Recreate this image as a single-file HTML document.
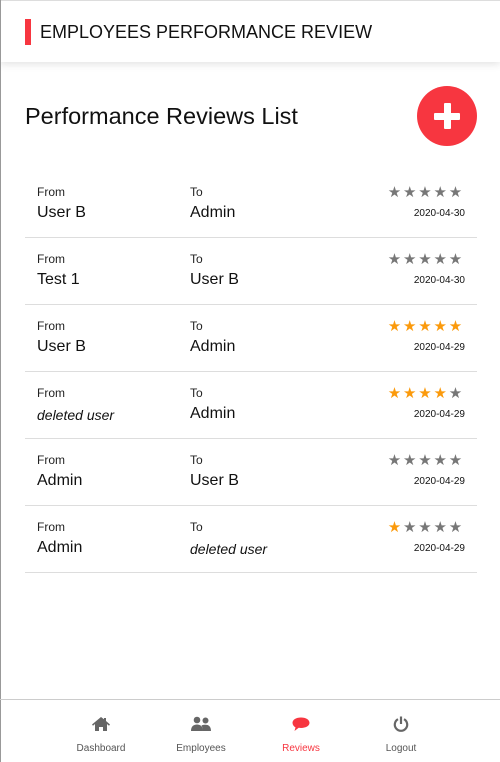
<!DOCTYPE html>
<html><head><style>
*{margin:0;padding:0;box-sizing:border-box}
body{width:500px;height:762px;background:#fff;font-family:"Liberation Sans",sans-serif;color:#222;position:relative;overflow:hidden}
.lb{position:absolute;left:0;top:0;width:1px;height:762px;background:#999}
.hdr{position:absolute;left:0;top:0;width:500px;height:62px;background:#fff;box-shadow:0 2px 8px rgba(0,0,0,.12);border-top:1px solid #ddd}
.bar{position:absolute;left:25px;top:18px;width:6px;height:26px;background:#f73640}
.hdr h1{position:absolute;left:40px;top:21px;font-size:18px;font-weight:normal;color:#111}
.title{position:absolute;left:25px;top:103px;font-size:23.5px;color:#111}
.fab{position:absolute;left:417px;top:86px;width:60px;height:60px;border-radius:50%;background:#f73640}
.fab:before{content:"";position:absolute;left:17px;top:26.5px;width:26px;height:7px;background:#fff;border-radius:1px}
.fab:after{content:"";position:absolute;left:26.5px;top:17px;width:7px;height:26px;background:#fff;border-radius:1px}
.row{position:absolute;left:25px;width:452px;height:67px;border-bottom:1px solid #ddd}
.l{position:absolute;font-size:12px;top:14px;color:#222}
.n{position:absolute;font-size:16px;top:33px;color:#111}
.i{font-style:italic;font-size:14px;top:35px}
.stars{position:absolute;right:13px;top:12px;font-size:15px;letter-spacing:1.8px;color:#777}
.stars b{color:#fb9a0c;font-weight:normal}
.d{position:absolute;right:12px;top:37px;font-size:10px;color:#111}
.nav{position:absolute;left:0;top:699px;width:500px;height:63px;border-top:1px solid #ccc}
.it{position:absolute;top:16px;width:100px;text-align:center;font-size:10px;color:#555}
.it svg{display:block;margin:0 auto 11px;height:16px}
.red{color:#f73640}
</style></head><body>
<div class="hdr"><div class="bar"></div><h1>EMPLOYEES PERFORMANCE REVIEW</h1></div>
<div class="lb"></div>
<div class="title">Performance Reviews List</div>
<div class="fab"></div>

<div class="row" style="top:171px"><span class="l" style="left:12px">From</span><span class="n" style="left:12px">User B</span><span class="l" style="left:165px">To</span><span class="n" style="left:165px">Admin</span><span class="stars">★★★★★</span><span class="d">2020-04-30</span></div>
<div class="row" style="top:238px"><span class="l" style="left:12px">From</span><span class="n" style="left:12px">Test 1</span><span class="l" style="left:165px">To</span><span class="n" style="left:165px">User B</span><span class="stars">★★★★★</span><span class="d">2020-04-30</span></div>
<div class="row" style="top:305px"><span class="l" style="left:12px">From</span><span class="n" style="left:12px">User B</span><span class="l" style="left:165px">To</span><span class="n" style="left:165px">Admin</span><span class="stars"><b>★★★★★</b></span><span class="d">2020-04-29</span></div>
<div class="row" style="top:372px"><span class="l" style="left:12px">From</span><span class="n i" style="left:12px">deleted user</span><span class="l" style="left:165px">To</span><span class="n" style="left:165px">Admin</span><span class="stars"><b>★★★★</b>★</span><span class="d">2020-04-29</span></div>
<div class="row" style="top:439px"><span class="l" style="left:12px">From</span><span class="n" style="left:12px">Admin</span><span class="l" style="left:165px">To</span><span class="n" style="left:165px">User B</span><span class="stars">★★★★★</span><span class="d">2020-04-29</span></div>
<div class="row" style="top:506px"><span class="l" style="left:12px">From</span><span class="n" style="left:12px">Admin</span><span class="l" style="left:165px">To</span><span class="n i" style="left:165px">deleted user</span><span class="stars"><b>★</b>★★★★</span><span class="d">2020-04-29</span></div>

<div class="nav">
<div class="it" style="left:51px"><svg viewBox="0 0 20 16" width="20"><path d="M10 1L1 8.5l1 1.2L4 8v7h4v-4h4v4h4V8l2 1.7 1-1.2L15 5V2h-2v1.3z" fill="#666"/></svg>Dashboard</div>
<div class="it" style="left:151px"><svg viewBox="0 0 22 16" width="22"><circle cx="7" cy="4" r="3.3" fill="#666"/><circle cx="15.5" cy="4.5" r="3" fill="#666"/><path d="M1 15c0-5 3-6.5 6-6.5s6 1.5 6 6.5z M13 15c0-3-1-4.5-1.5-5.5 1-.6 2.5-.8 4-.8 3 0 5.5 1.5 5.5 6.3z" fill="#666"/></svg>Employees</div>
<div class="it red" style="left:251px"><svg viewBox="0 0 20 16" width="20"><path d="M10 1.5c5 0 8.5 2.3 8.5 5.3S15 12 10 12c-.8 0-1.6-.1-2.3-.2L3.5 15l1-3.6C2.6 10.4 1.5 8.7 1.5 6.8c0-3 3.5-5.3 8.5-5.3z" fill="#f73640"/></svg>Reviews</div>
<div class="it" style="left:351px"><svg viewBox="0 0 16 16" width="16"><path d="M5 3.2A6.2 6.2 0 1 0 11 3.2" fill="none" stroke="#666" stroke-width="2.2"/><rect x="6.9" y="0.5" width="2.2" height="7.5" fill="#666"/></svg>Logout</div>
</div>
</body></html>
